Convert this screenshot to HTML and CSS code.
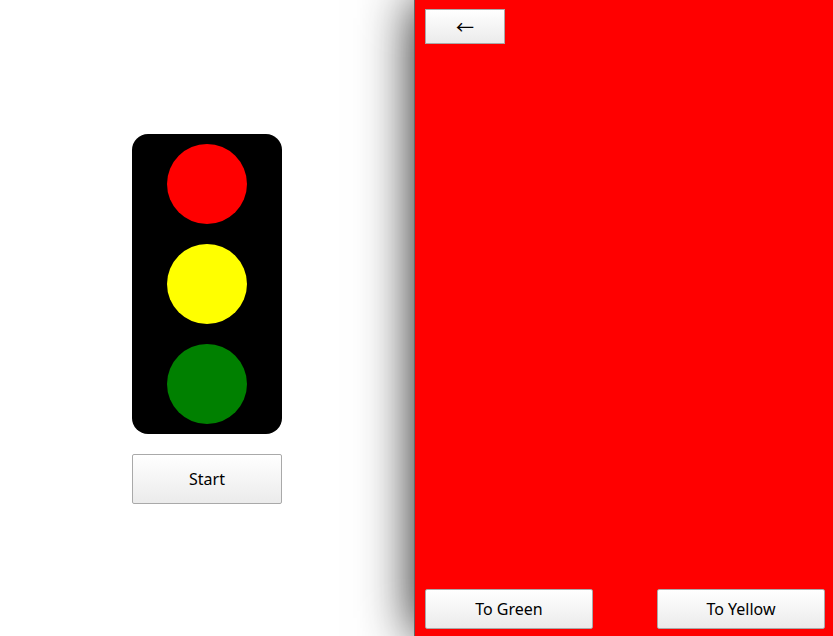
FILE: index.html
```html
<!DOCTYPE html>
<html lang="en">
<head>
<meta charset="utf-8">
<title>Traffic Light</title>
<link rel="stylesheet" href="styles.css">
</head>
<body>
<main class="app">
  <section class="home">
    <div class="traffic-light">
      <div class="lamp red"></div>
      <div class="lamp yellow"></div>
      <div class="lamp green"></div>
    </div>
    <button class="button start">Start</button>
  </section>
  <section class="screen">
    <button class="button back">←</button>
    <div class="actions">
      <button class="button action">To Green</button>
      <button class="button action">To Yellow</button>
    </div>
  </section>
</main>
</body>
</html>
```
FILE: styles.css
```css
* { box-sizing: border-box; }
body { margin: 0; background: #fff; overflow: hidden; }
.app { display: flex; height: 636px; }
.home {
  width: 414px;
  display: flex;
  flex-direction: column;
  align-items: center;
  padding-top: 134px;
}
.traffic-light {
  width: 150px;
  height: 300px;
  border-radius: 16px;
  background: #000;
  display: flex;
  flex-direction: column;
  align-items: center;
  justify-content: space-around;
}
.lamp { width: 80px; height: 80px; border-radius: 50%; }
.red { background: #f00; }
.yellow { background: #ff0; }
.green { background: #008000; }
.screen {
  flex: 1;
  display: flex;
  flex-direction: column;
  justify-content: space-between;
  align-items: flex-start;
  padding: 9px 8px 7px 10px;
  background: #f00;
  border-left: 1px solid #666;
  box-shadow: 0 0 50px #1c1c1c;
}
.button {
  padding: 0;
  border: 1px solid #a9a9a9;
  border-radius: 2px;
  background: linear-gradient(#fff, #ebebeb);
  color: #000;
  font: 16px "Noto Sans", sans-serif;
}
.start { width: 150px; height: 50px; margin-top: 20px; }
.back {
  width: 80px;
  height: 35px;
  padding-bottom: 2px;
  border-radius: 0;
  font: 18px "Noto Sans CJK SC", sans-serif;
}
.actions { display: flex; justify-content: space-between; width: 100%; }
.action { width: 168px; height: 40px; }
```
